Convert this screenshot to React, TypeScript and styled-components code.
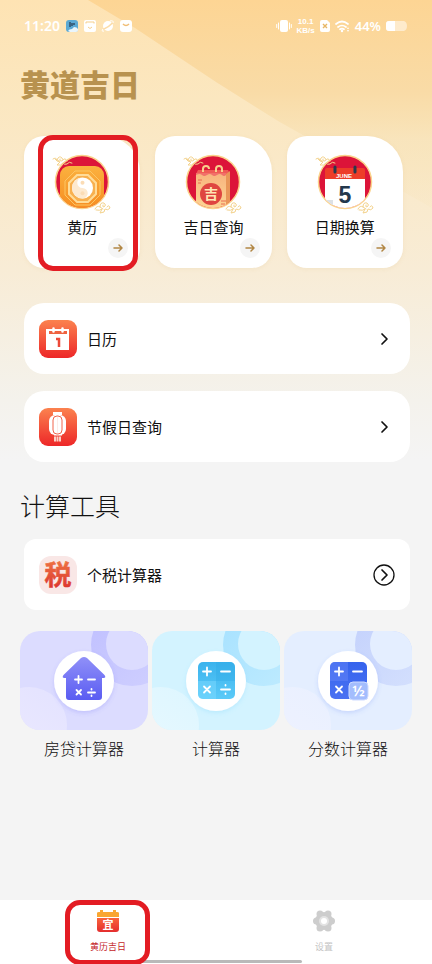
import React from "react";
import styled, { createGlobalStyle } from "styled-components";

const GlobalStyle = createGlobalStyle`
  *, *::before, *::after { box-sizing: border-box; }
  body {
    margin: 0;
    background: #f4f4f4;
    color: #111;
    font-family: "Noto Sans CJK SC", "Noto Sans", sans-serif;
  }
  button {
    border: 0;
    padding: 0;
    background: none;
    color: inherit;
    font: inherit;
    text-align: left;
    cursor: pointer;
  }
  svg { display: block; flex: none; }
`;

const Page = styled.div`
  position: relative;
  isolation: isolate;
  display: flex;
  flex-direction: column;
  min-height: 100vh;
  overflow: hidden;
  background: linear-gradient(#fee3b3 0, #fbe7c0 100px, #f8ecd6 270px, #f4f2ec 400px, #f4f4f4 460px);

  &::before {
    content: "";
    position: absolute;
    z-index: -1;
    top: 0;
    right: 0;
    left: 88px;
    height: 250px;
    background: linear-gradient(#fdd594 0, #f9dba6 90px, rgba(247, 226, 182, 0.6) 140px, rgba(247, 236, 216, 0) 230px);
    clip-path: polygon(0 0, 47px 28px, 128px 82px, 190px 121px, 344px 208px, 100% 100%, 100% 0);
  }
`;

const StatusBar = styled.header`
  display: flex;
  align-items: center;
  justify-content: space-between;
  height: 52px;
  padding: 0 24px;
  color: #fff;
  font-family: "Noto Sans", sans-serif;
`;

const StatusGroup = styled.div`
  display: flex;
  align-items: center;
  gap: 5px;
`;

const Clock = styled.time`
  font-size: 14px;
  line-height: 20px;
  font-weight: 600;
`;

const Speed = styled.span`
  display: grid;
  font-family: "Liberation Sans", sans-serif;
  font-size: 8px;
  line-height: 9px;
  font-weight: 700;
  text-align: center;
`;

const BatteryText = styled.span`
  font-size: 13px;
  line-height: 20px;
  font-weight: 600;
`;

const Main = styled.main`
  flex: 1;
  padding: 13px 20px 32px;
`;

const Title = styled.h1`
  margin: 0;
  color: #b8924f;
  font-size: 30px;
  line-height: 36px;
  font-weight: 900;
`;

const FeatureGrid = styled.section`
  display: grid;
  grid-template-columns: repeat(3, 1fr);
  gap: 15px;
  margin: 35px 9px 0 4px;
`;

const FeatureCard = styled.button`
  position: relative;
  display: flex;
  flex-direction: column;
  align-items: center;
  height: 132px;
  padding: 16px 0 0;
  border-radius: 20px 36px 20px 20px;
  background: #fff;
  box-shadow: 0 1px 4px rgba(200, 160, 80, 0.1);
`;

const FeatureLabel = styled.span`
  margin-top: 3px;
  font-size: 15px;
  line-height: 20px;
  font-weight: 400;
`;

const GoBadge = styled.span`
  display: grid;
  place-items: center;
  align-self: flex-end;
  width: 20px;
  height: 20px;
  margin: 1px 12px 0 0;
  border-radius: 50%;
  background: #f5f5f5;
`;

const Marker = styled.span<{ $inset: string }>`
  position: absolute;
  z-index: 2;
  inset: ${(p) => p.$inset};
  border: 5px solid #e31c23;
  border-radius: 15px;
  pointer-events: none;
`;

const List = styled.section<{ $top: number }>`
  display: grid;
  gap: 17px;
  margin: ${(p) => p.$top}px 2px 0 4px;
`;

const Row = styled.button<{ $radius: number }>`
  display: flex;
  align-items: center;
  gap: 10px;
  height: 71px;
  padding: 0 14px 0 15px;
  border-radius: ${(p) => p.$radius}px;
  background: #fff;
`;

const RowLabel = styled.span`
  flex: 1;
  font-size: 15px;
  line-height: 24px;
  font-weight: 400;
`;

const SectionTitle = styled.h2`
  margin: 26px 0 0;
  font-size: 25px;
  line-height: 34px;
  font-weight: 300;
`;

const TileGrid = styled.section`
  display: grid;
  grid-template-columns: repeat(3, 1fr);
  gap: 4px;
  margin-top: 21px;
`;

const Tile = styled.button`
  display: flex;
  flex-direction: column;
  align-items: center;
  gap: 6px;
`;

const TileArt = styled.span<{ $bg: string }>`
  width: 100%;
  height: 99px;
  border-radius: 20px;
  overflow: hidden;
  background: ${(p) => p.$bg};
`;

const TileLabel = styled.span`
  font-size: 16px;
  line-height: 24px;
  font-weight: 300;
`;

const TabBar = styled.nav`
  position: relative;
  display: grid;
  grid-template-columns: repeat(2, 1fr);
  height: 64px;
  background: #fff;
`;

const Tab = styled.button<{ $active?: boolean }>`
  position: relative;
  display: flex;
  flex-direction: column;
  align-items: center;
  gap: 7px;
  padding-top: 9px;
  color: ${(p) => (p.$active ? "#c4262a" : "#c4c4c4")};
  font-size: 9px;
  line-height: 14px;
  font-weight: 400;
`;

const HomeIndicator = styled.span`
  position: absolute;
  z-index: 1;
  bottom: 1px;
  left: 30%;
  width: 40%;
  height: 3px;
  border-radius: 2px;
  background: #b9b9b9;
`;

const NotificationIcons = () => (
  <svg width="68" height="14" viewBox="0 0 68 14" aria-hidden="true">
    <rect x="1" y="1" width="12" height="12" rx="3" fill="#5ba9d4" />
    <path d="M5 3v5M7 4v3M9 4v2" stroke="#293f57" strokeWidth="1.300" />
    <path d="M3 12q1-2 4-2l2-2q3 0 4 2v1q0 2-3 2H5z" fill="#e9f5fc" />
    <rect x="19" y="1" width="12" height="12" rx="2" fill="#fff" />
    <path d="M21 4.500v-1.500h8v1.500M23 8l2 1.500L27 8" fill="none" stroke="#f6cf8b" />
    <circle cx="43" cy="7" r="5" fill="#fff" />
    <path d="M38 10.500Q44 8 48 3.500" fill="none" stroke="#fbdca8" strokeWidth="1.500" />
    <path d="M38 10q-2 3 1 2M45 2q4-1 3 2" fill="none" stroke="#fff" />
    <rect x="55" y="1" width="12" height="12" rx="3" fill="#fff" />
    <path d="M58 5q3 3 6 0" fill="none" stroke="#f0bd75" strokeWidth="1.500" />
  </svg>
);

const VibrateIcon = () => (
  <svg width="16" height="14" viewBox="0 0 16 14" aria-hidden="true">
    <rect x="4" y="1" width="8" height="12" rx="2" fill="#fff" />
    <path d="M2.500 4v6M.7 5.500v3M13.500 4v6M15.300 5.500v3" stroke="#fff" strokeLinecap="round" />
  </svg>
);

const SimIcon = () => (
  <svg width="10" height="12" viewBox="0 0 10 12" aria-hidden="true">
    <path d="M2 0h5l3 3v7q0 2-2 2H2q-2 0-2-2V2q0-2 2-2z" fill="#fff" />
    <path d="m3 4 4 4m0-4L3 8" stroke="#e7b767" strokeWidth="1.400" />
  </svg>
);

const WifiIcon = () => (
  <svg width="15" height="13" viewBox="0 0 15 13" aria-hidden="true">
    <g fill="none" stroke="#fff" strokeWidth="1.700" strokeLinecap="round">
      <path d="M1 4q6-5 12 0M3 7q4-3 8 0M5 9.300q2-1.500 4 0" />
    </g>
    <circle cx="7" cy="11" r="1.200" fill="#fff" />
    <path d="m12 9 1-2 1 2zm0 1 1 2 1-2z" fill="#fff" />
  </svg>
);

const BatteryIcon = () => (
  <svg width="22" height="12" viewBox="0 0 22 12" aria-hidden="true">
    <path d="M3 1h15q3 1 3 5t-3 5H3Q0 11 0 8V4q0-3 3-3z" fill="#fff" opacity=".5" />
    <path d="M3 1h6v10H3Q0 11 0 8V4q0-3 3-3z" fill="#fff" />
  </svg>
);

const Medallion = ({ id, children }: { id: string; children: React.ReactNode }) => (
  <svg width="64" height="62" viewBox="0 0 64 62" aria-hidden="true">
    <defs>
      <clipPath id={`${id}-clip`}>
        <circle cx="32" cy="30" r="26" />
      </clipPath>
      <linearGradient id={`${id}-orange`} x1="0" y1="0" x2="0" y2="1">
        <stop stopColor="#fbb13f" />
        <stop offset="1" stopColor="#f68c20" />
      </linearGradient>
      <linearGradient id={`${id}-bag`} x1="0" y1="0" x2="0" y2="1">
        <stop stopColor="#f8b47e" />
        <stop offset="1" stopColor="#fdd996" />
      </linearGradient>
    </defs>
    <circle cx="32" cy="30" r="26.500" fill="#dc1439" stroke="#fbd38b" strokeWidth="1.500" />
    <g clipPath={`url(#${id}-clip)`}>{children}</g>
    <g fill="none" stroke="#f3d28c" strokeWidth="1" strokeLinecap="round" strokeLinejoin="round">
      <path d="M3 7q3-2 4 1 2-5 5-2 2 3-1 3-2 0-1-2M5 7q2 3 5 3l-3 3q4 1 6-2 1 2 4 1 2-3 5-1M9 9l-2-1M13 8q2-3 4 1" />
      <path d="M45 57q2-4 5-2 0-5 4-4 3 2 0 4-2 0-1-2M46 58q4 1 6-1l-2 4 4-1 1-3q3 2 5-1-1-4-3-1M50 55l3 2" />
    </g>
  </svg>
);

const AlmanacIcon = () => (
  <Medallion id="almanac">
    <rect x="10" y="14" width="44" height="44" rx="9" fill="url(#almanac-orange)" />
    <path d="M25 19h15l10 10v14L40 53H25L15 43V29z" fill="none" stroke="#fcc665" strokeWidth="1" />
    <path d="M27 23h11l8 8v11l-8 8H27l-8-8V31z" fill="#f8b04f" stroke="#ffdc98" strokeWidth="2" />
    <circle cx="32.500" cy="36" r="10.500" fill="#fff" />
    <path d="M32.500 25.500a5.250 5.250 0 0 0 0 10.500 5.250 5.250 0 0 1 0 10.500 10.500 10.500 0 0 0 0-21z" fill="#fde9cf" transform="rotate(180 32.500 36)" />
    <circle cx="32.500" cy="30.700" r="2" fill="#fbdcb5" />
    <circle cx="32.500" cy="41.300" r="2" fill="#fbdcb5" />
  </Medallion>
);

const LuckyBagIcon = () => (
  <Medallion id="lucky">
    <path d="M17 18h30l2 4v37H15V22z" fill="#f05a55" />
    <path d="M15 22h32v38H15z" fill="url(#lucky-bag)" />
    <path d="M45 22l4-3v41h-4z" fill="#e99658" />
    <path d="M15 21h30v2q-2 2-4 0t-5 0-5 0-5 0-5 0-6 0z" fill="#f1706a" />
    <path d="M22 20v-3q0-3 3-3t3 3M35 20v-3q0-3 3-3t3 3v3" fill="none" stroke="#f8cf8c" strokeWidth="2" />
    <circle cx="30" cy="42" r="11" fill="#df4540" />
    <text x="30" y="47" textAnchor="middle" fontSize="14" fontWeight="700" fill="#ffe7b4">吉</text>
    <path d="M17 28h4M17 31h3M40 49h5M40 52h4M40 55h4" stroke="#ea6d53" />
  </Medallion>
);

const DateIcon = () => (
  <Medallion id="date">
    <path d="M12 25h40v36H12z" fill="#fff" />
    <path d="M12 18q0-2 2-2h36q2 0 2 2v9H12z" fill="#ed3d28" />
    <path d="M22 15v5M42 15v5" stroke="#29394c" strokeWidth="3" strokeLinecap="round" />
    <text x="31" y="26" textAnchor="middle" fontFamily="Liberation Sans" fontSize="6" fontWeight="700" fill="#fff">JUNE</text>
    <text x="32" y="51" textAnchor="middle" fontFamily="Liberation Sans" fontSize="23" fontWeight="700" fill="#24384c">5</text>
    <path d="M12 48h8v5h-8z" fill="#dde1e5" />
  </Medallion>
);

const ArrowIcon = () => (
  <svg width="10" height="10" viewBox="0 0 10 10" fill="none" stroke="#b18644" strokeWidth="1.500" strokeLinecap="round" strokeLinejoin="round" aria-hidden="true">
    <path d="M1 5h8M6 2l3 3-3 3" />
  </svg>
);

const RedBadge = ({ id, children }: { id: string; children: React.ReactNode }) => (
  <svg width="38" height="38" viewBox="0 0 38 38" aria-hidden="true">
    <defs>
      <linearGradient id={id} x1="0" y1="0" x2="0" y2="1">
        <stop stopColor="#fb824f" />
        <stop offset="1" stopColor="#ed2728" />
      </linearGradient>
    </defs>
    <rect width="38" height="38" rx="9" fill={`url(#${id})`} />
    {children}
  </svg>
);

const CalendarBadge = () => (
  <RedBadge id="calendar-badge">
    <path d="M7 9h23v21H7z" fill="#fff" />
    <path d="M10 11h18v3H10z" fill="#ef6240" />
    <path d="M14.500 8.500v3M23.500 8.500v3" stroke="#fff" strokeWidth="2.500" strokeLinecap="round" />
    <path d="M17 19h3v8" fill="none" stroke="#ed4938" strokeWidth="2.500" />
  </RedBadge>
);

const LanternBadge = () => (
  <RedBadge id="lantern-badge">
    <path d="M14 4h9v3h-9zM15 26h8v1.500h-8z" fill="#fff" />
    <rect x="10" y="7" width="17" height="20" rx="6" fill="#fff" />
    <rect x="14" y="8" width="9" height="18" rx="4" fill="none" stroke="#f1644c" />
    <path d="M18.500 9v16" stroke="#fdece8" />
    <path d="M16 28.500v5M18.500 28.500v5M21 28.500v5" stroke="#fbd0c6" strokeWidth="2" />
  </RedBadge>
);

const TaxBadge = () => (
  <svg width="38" height="38" viewBox="0 0 38 38" aria-hidden="true">
    <defs>
      <linearGradient id="tax-fill" x1="0" y1="0" x2="0" y2="1">
        <stop stopColor="#f28248" />
        <stop offset="1" stopColor="#d92a2c" />
      </linearGradient>
    </defs>
    <rect width="38" height="38" rx="12" fill="#f9e7e6" />
    <text x="19" y="29" textAnchor="middle" fontSize="27" fontWeight="700" fill="url(#tax-fill)" stroke="url(#tax-fill)" strokeWidth=".5">税</text>
  </svg>
);

const ChevronIcon = ({ circled }: { circled?: boolean }) => (
  <svg width="24" height="24" viewBox="0 0 24 24" fill="none" stroke="#111" strokeWidth="1.700" strokeLinecap="round" strokeLinejoin="round" aria-hidden="true">
    {circled && <circle cx="12" cy="12" r="10" strokeWidth="1.300" />}
    <path d="m10 7 5 5-5 5" />
  </svg>
);

type Tone = { id: string; bg: string; ring: string; bubble: string; from: string; to: string };

const ToolArt = ({ tone, children }: { tone: Tone; children: React.ReactNode }) => (
  <TileArt $bg={tone.bg}>
    <svg width="100%" height="100%" viewBox="0 0 128 99" preserveAspectRatio="xMidYMid slice" aria-hidden="true">
      <defs>
        <linearGradient id={`${tone.id}-ring`} x1="0" y1="0" x2="1" y2="1">
          <stop stopColor={tone.ring} />
          <stop offset="1" stopColor={tone.ring} stopOpacity=".4" />
        </linearGradient>
        <linearGradient id={`${tone.id}-bubble`} x1=".3" y1="1" x2="1" y2="0">
          <stop stopColor={tone.bubble} />
          <stop offset="1" stopColor={tone.bubble} stopOpacity=".5" />
        </linearGradient>
        <linearGradient id={`${tone.id}-icon`} x1="0" y1="0" x2="0" y2="1">
          <stop stopColor={tone.from} />
          <stop offset="1" stopColor={tone.to} />
        </linearGradient>
        <filter id={`${tone.id}-shadow`} x="-20%" y="-20%" width="140%" height="140%">
          <feDropShadow dx="0" dy="2" stdDeviation="2" floodColor={tone.to} floodOpacity=".2" />
        </filter>
      </defs>
      <circle cx="112" cy="14" r="41" fill={`url(#${tone.id}-ring)`} />
      <circle cx="112" cy="13" r="26" fill={tone.bg} />
      <circle cx="9" cy="94" r="38" fill={`url(#${tone.id}-bubble)`} />
      <circle cx="64" cy="50" r="30" fill="#fff" filter={`url(#${tone.id}-shadow)`} />
      {children}
    </svg>
  </TileArt>
);

const violet: Tone = { id: "violet", bg: "#dcdcff", ring: "#bfbfff", bubble: "#ebe9ff", from: "#9090f8", to: "#5a5cf2" };
const cyan: Tone = { id: "cyan", bg: "#d3f3ff", ring: "#a5e1ff", bubble: "#e8f9ff", from: "#3bb3ed", to: "#5bcaf8" };
const blue: Tone = { id: "blue", bg: "#e4eeff", ring: "#c2d0fc", bubble: "#eff2ff", from: "#3563ed", to: "#4b72f2" };

const MortgageArt = () => (
  <ToolArt tone={violet}>
    <path d="M61 27q3-2 6 0l17.500 17q2 3-1 3H82v19q0 3-3 3H49q-3 0-3-3V47h-1.500q-3 0-1-3z" fill="url(#violet-icon)" />
    <path d="M55 48.500h7M58.500 45v7M68 48.500h7M56.500 59l4.500 4.500m0-4.500-4.500 4.500M68 61.500h7M71.500 58v.5M71.500 64.500v.5" stroke="#fff" strokeWidth="1.800" strokeLinecap="round" />
  </ToolArt>
);

const CalculatorArt = () => (
  <ToolArt tone={cyan}>
    <rect x="46" y="31" width="37" height="37" rx="5" fill="url(#cyan-icon)" />
    <path d="M64 31h14q5 0 5 5v14H64z" fill="#2fa9e7" opacity=".4" />
    <path d="M46 50h18v18H51q-5 0-5-5z" fill="#7bd9ff" opacity=".5" />
    <path d="M51 40.500h8M55 36.500v8M69 40.500h9M52 55.500l6 6m0-6-6 6M69 58.500h9M73.500 54v.5M73.500 62.500v.5" stroke="#fff" strokeWidth="1.800" strokeLinecap="round" />
  </ToolArt>
);

const FractionArt = () => (
  <ToolArt tone={blue}>
    <rect x="46" y="31" width="37" height="37" rx="5" fill="url(#blue-icon)" />
    <path d="M51 31h13v19H46V36q0-5 5-5z" fill="#6686f7" opacity=".5" />
    <path d="M51 40.500h8M55 36.500v8M69 40.500h9M52 55.500l6 6m0-6-6 6" stroke="#fff" strokeWidth="1.800" strokeLinecap="round" />
    <rect x="65" y="51" width="19" height="18" rx="4" fill="#a3bdfd" stroke="#cfdcff" />
    <text x="74.500" y="65" textAnchor="middle" fontFamily="Noto Sans" fontSize="15" fontWeight="600" fill="#fff">½</text>
  </ToolArt>
);

const AlmanacTabIcon = () => (
  <svg width="24" height="24" viewBox="0 0 24 24" aria-hidden="true">
    <defs>
      <linearGradient id="tab-red" x1="0" y1="0" x2="0" y2="1">
        <stop stopColor="#f9643b" />
        <stop offset="1" stopColor="#e42d2e" />
      </linearGradient>
    </defs>
    <path d="M1 8V4q0-1 2-1h1V1h3v2h10V1h3v2h1q2 0 2 1v4z" fill="#f9a631" />
    <path d="M1 9h22v11q0 3-3 3H4q-3 0-3-3z" fill="url(#tab-red)" />
    <text x="12" y="20" textAnchor="middle" fontSize="11" fontWeight="700" fill="#fff">宜</text>
  </svg>
);

const GearTabIcon = () => (
  <svg width="24" height="24" viewBox="0 0 24 24" aria-hidden="true">
    <g fill="#cdcdcd">
      <circle cx="12" cy="12" r="9" />
      <circle cx="8" cy="5" r="3.500" />
      <circle cx="16" cy="5" r="3.500" />
      <circle cx="4.500" cy="12" r="3.500" />
      <circle cx="19.500" cy="12" r="3.500" />
      <circle cx="8" cy="19" r="3.500" />
      <circle cx="16" cy="19" r="3.500" />
    </g>
    <circle cx="12" cy="12" r="5" fill="#e3e3e3" />
    <circle cx="12" cy="12" r="3" fill="#fff" />
  </svg>
);

const features = [
  { label: "黄历", Icon: AlmanacIcon, marked: true },
  { label: "吉日查询", Icon: LuckyBagIcon, marked: false },
  { label: "日期换算", Icon: DateIcon, marked: false },
];

const tools = [
  { label: "房贷计算器", Art: MortgageArt },
  { label: "计算器", Art: CalculatorArt },
  { label: "分数计算器", Art: FractionArt },
];

export default function App() {
  return (
    <Page>
      <GlobalStyle />
      <StatusBar>
        <StatusGroup>
          <Clock>11:20</Clock>
          <NotificationIcons />
        </StatusGroup>
        <StatusGroup>
          <VibrateIcon />
          <Speed><span>10.1</span><span>KB/s</span></Speed>
          <SimIcon />
          <WifiIcon />
          <BatteryText>44%</BatteryText>
          <BatteryIcon />
        </StatusGroup>
      </StatusBar>
      <Main>
        <Title>黄道吉日</Title>
        <FeatureGrid>
          {features.map(({ label, Icon, marked }) => (
            <FeatureCard key={label} type="button">
              <Icon />
              <FeatureLabel>{label}</FeatureLabel>
              <GoBadge><ArrowIcon /></GoBadge>
              {marked && <Marker $inset="-1px 2px -3px 14px" />}
            </FeatureCard>
          ))}
        </FeatureGrid>
        <List $top={35}>
          <Row type="button" $radius={20}>
            <CalendarBadge />
            <RowLabel>日历</RowLabel>
            <ChevronIcon />
          </Row>
          <Row type="button" $radius={20}>
            <LanternBadge />
            <RowLabel>节假日查询</RowLabel>
            <ChevronIcon />
          </Row>
        </List>
        <SectionTitle>计算工具</SectionTitle>
        <List $top={17}>
          <Row type="button" $radius={12}>
            <TaxBadge />
            <RowLabel>个税计算器</RowLabel>
            <ChevronIcon circled />
          </Row>
        </List>
        <TileGrid>
          {tools.map(({ label, Art }) => (
            <Tile key={label} type="button">
              <Art />
              <TileLabel>{label}</TileLabel>
            </Tile>
          ))}
        </TileGrid>
      </Main>
      <TabBar>
        <Tab type="button" $active>
          <AlmanacTabIcon />
          黄历吉日
        </Tab>
        <Tab type="button">
          <GearTabIcon />
          设置
        </Tab>
        <HomeIndicator />
        <Marker $inset="0 calc(65% + 1px) -1px 15%" />
      </TabBar>
    </Page>
  );
}
